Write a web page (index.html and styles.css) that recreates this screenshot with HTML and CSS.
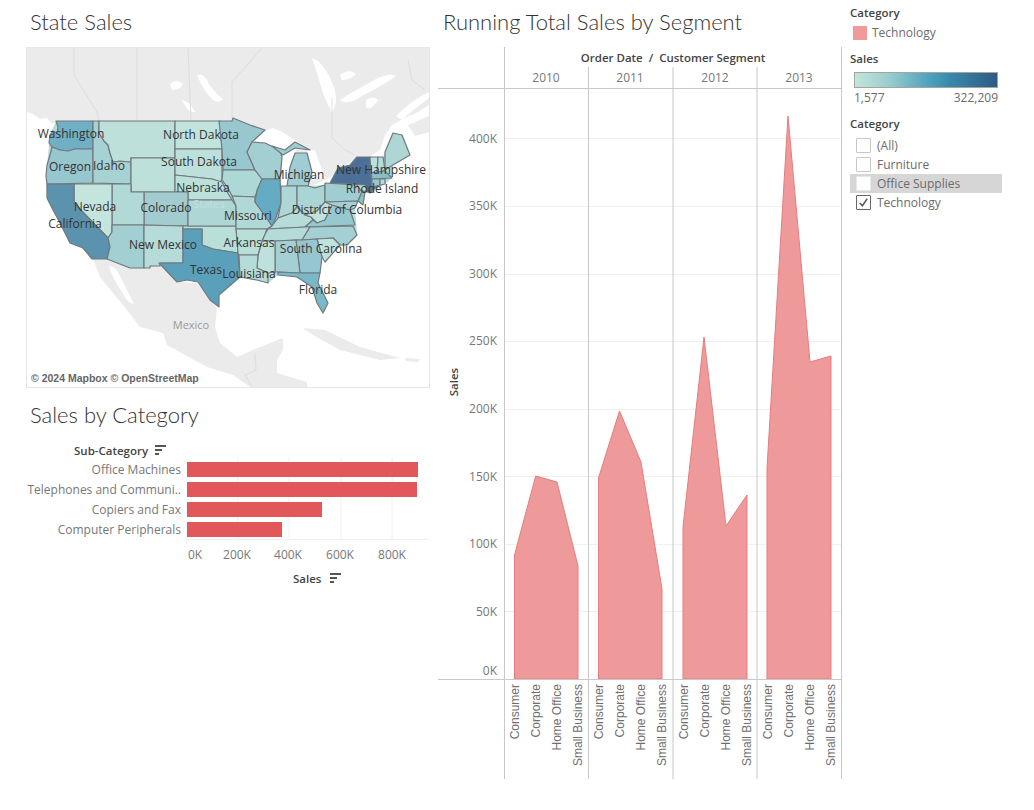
FILE: index.html
```html
<!DOCTYPE html>
<html lang="en">

<head>
    <meta charset="UTF-8">
    <title>Sales Dashboard</title>
    <link rel="stylesheet" href="styles.css">
</head>

<body>
    <div class="col-left">
        <h2 class="title">State Sales</h2>
        <div class="map-box">
            <svg class="map" viewBox="27 48 402 339" width="402" height="339">
                <!-- base map -->
                <g class="land">
                    <polygon points="27,48 429,48 429,105 418,112 405,118 392,125 385,135 380,150 365,160 345,172 320,185 305,190 300,170 295,150 270,135 250,128 233,121 57,121 52,124 47,118 40,119 33,114 27,112" />
                    <polygon points="408,125 429,116 429,132 415,136" />
                    <polygon points="93,259 108,259 130,268 160,265 172,277 183,282 197,283 217,308 215,327 220,343 237,357 260,347 283,338 283,350 277,360 277,373 307,382 307,387 250,387 233,375 207,367 167,345 163,333 140,327 127,310 113,293 100,277" />
                    <polygon points="303,328 325,330 360,347 400,358 380,360 340,350 313,335" />
                    <polygon points="405,358 420,359 418,362 406,361" />
                </g>
                <g class="water">
                    <path d="M109,266 Q116,266 120,276 L134,304 Q128,304 122,292 Q112,278 109,266z" />
                    <path d="M312,58 Q325,62 335,90 Q338,105 332,112 Q325,100 322,90 Q318,75 312,58z" />
                    <path d="M197,75 Q204,72 209,84 Q214,92 223,99 Q218,105 211,98 Q203,90 197,75z" />
                    <path d="M170,84 Q176,78 183,84 Q180,90 172,90z" />
                    <path d="M182,100 Q190,102 195,112 Q188,114 182,100z" />
                    <path d="M340,75 Q350,68 356,74 Q350,80 342,80z" />
                    <path d="M340,100 Q352,92 378,78 Q392,72 396,76 Q385,84 362,96 Q348,106 340,100z" />
                    <path d="M366,100 Q374,95 378,100 Q372,110 366,108z" />
                    <path d="M396,116 Q412,100 429,92 L429,98 Q415,108 402,120z" />
                    <path d="M252,141 Q258,134 265,131 L273,128 Q282,131 290,137 L305,147 Q296,145 290,146 L280,148 L265,143z" />
                    <path d="M280,183 L281,165 L286,155 L297,147 L295,153 L290,167 L287,186 L281,186z" />
                    <path d="M307,150 L315,150 Q318,160 323,172 L325,178 L312,180 L312,172z" />
                    <path d="M307,188 L325,180 L336,174 L352,160 L354,163 L342,171 L330,183 L312,189z" />
                </g>
                <polyline class="border-line" points="74,48 74,75 97,112 99,121" />
                <polyline class="border-line" points="137,48 137,120" />
                <polyline class="border-line" points="188,48 191,120" />
                <polyline class="border-line" points="262,48 232,82 232,118" />
                <polyline class="border-line" points="332,98 332,138 345,150 355,155" />
                <polyline class="border-line" points="408,60 412,80 425,90" />
                <polyline class="border-line" points="255,353 256,370 245,375 252,387" />

                <!-- states -->
                <polygon class="us-back" points="56,121 233,121 250,125 265,130 252,142 265,143 280,150 282,157 281,186 287,186 290,167 295,153 307,153 312,172 308,186 325,185 330,183 338,168 350,165 357,157 383,157 385,152 393,133 402,135 410,155 393,165 392,178 385,184 370,193 365,192 363,205 358,201 355,208 357,235 347,245 340,245 325,262 322,257 320,273 318,283 328,303 323,313 317,303 312,287 297,277 278,275 268,283 240,277 233,283 219,295 219,307 210,300 198,282 187,280 177,282 159,263 150,268 130,268 107,259 92,259 83,248 70,243 60,223 53,210 47,198 46,176 50,135" />
                <g class="states">
                    <polygon fill="#6fb0c4" points="56,121 93,121 93,149 75,149 68,151 60,150 52,147 49,143 50,135 53,131 57,133 58,127" />
                    <polygon fill="#96c6ce" points="52,147 60,150 68,151 75,149 93,149 93,183 47,184 46,176 47,165 50,155" />
                    <polygon fill="#a6d2d3" points="93,121 99,121 99,133 104,141 108,145 110,153 113,162 120,161 131,162 131,184 93,183" />
                    <polygon fill="#bde0da" points="99,121 175,121 175,158 131,158 131,162 120,161 113,162 110,153 108,145 104,141 99,133" />
                    <polygon fill="#bde0da" points="131,158 175,158 175,192 131,192" />
                    <polygon fill="#c0e3dc" points="175,121 220,121 222,149 175,149" />
                    <polygon fill="#bde0da" points="175,149 222,149 222,180 220,182 212,179 175,175" />
                    <polygon fill="#bce0da" points="175,175 212,179 222,182 226,190 232,200 188,200 188,192 175,192" />
                    <polygon fill="#a3ccd1" points="144,192 188,192 188,226 144,225" />
                    <polygon fill="#b1d9d6" points="112,184 131,184 131,192 144,192 144,225 112,225" />
                    <polygon fill="#c3e5de" points="74,184 112,184 112,232 108,238 74,203" />
                    <polygon fill="#5b93ae" points="47,184 74,184 74,203 108,238 110,247 107,259 92,259 83,248 70,243 60,223 53,210 47,198" />
                    <polygon fill="#a2cfd2" points="112,225 144,225 144,268 130,268 107,259 110,247 108,238 112,232" />
                    <polygon fill="#b5dcd8" points="144,225 183,226 183,263 160,263 160,266 150,266 150,268 144,268" />
                    <polygon fill="#b8e0d8" points="183,226 236,226 238,253 213,249 202,245 202,229 183,229" />
                    <polygon fill="#5ba0bb" points="183,229 202,229 202,245 213,249 238,253 240,277 233,283 219,295 219,307 210,300 198,282 187,280 177,282 159,263 183,263" />
                    <polygon fill="#aed6d5" points="188,200 232,200 236,206 236,226 188,226" />
                    <polygon fill="#99c7d0" points="219,121 232,121 233,118 250,125 265,130 252,142 247,152 255,170 223,170 222,149" />
                    <polygon fill="#aed8d5" points="223,170 255,170 262,179 255,197 232,196 228,188 222,180" />
                    <polygon fill="#b0d9d6" points="232,196 255,197 255,202 268,220 272,226 267,229 236,229 236,206" />
                    <polygon fill="#a3cfd3" points="252,142 265,143 280,150 282,157 280,179 262,179 255,170 247,152" />
                    <polygon fill="#65abc3" points="262,179 280,179 281,203 275,220 272,226 268,220 255,202 257,190" />
                    <polygon fill="#a0cdd3" points="295,153 307,153 312,172 308,186 287,186 290,167" />
                    <polygon fill="#a0cdd3" points="272,146 285,150 295,142 310,150 295,148 283,155" />
                    <polygon fill="#aed6d6" points="281,186 297,186 297,207 292,213 278,218 281,203" />
                    <polygon fill="#abd4d5" points="297,186 308,186 315,188 325,185 325,202 317,211 305,215 297,207" />
                    <polygon fill="#b5dcd8" points="272,226 278,218 292,213 297,207 305,215 311,217 313,220 305,227 268,229" />
                    <polygon fill="#c0e3dc" points="305,215 317,211 325,202 332,205 325,220 317,223 311,217" />
                    <polygon fill="#97c8cf" points="305,227 313,220 317,223 325,220 332,205 350,210 355,225" />
                    <polygon fill="#b4dbd8" points="268,229 305,227 310,227 302,240 296,240 275,241 262,241 265,234" />
                    <polygon fill="#a4d0d3" points="310,227 353,226 357,235 347,245 340,245 333,238 317,239 302,240" />
                    <polygon fill="#bfe3dc" points="317,239 333,238 340,245 325,262 322,257" />
                    <polygon fill="#96c6cf" points="296,240 302,240 317,239 322,257 320,273 300,273" />
                    <polygon fill="#a5d0d3" points="275,241 296,240 300,273 278,272 275,272" />
                    <polygon fill="#bee2db" points="262,241 275,241 275,272 268,273 257,268 258,255" />
                    <polygon fill="#b9dfd9" points="236,229 267,229 265,234 262,241 258,255 239,255 238,253" />
                    <polygon fill="#b5dcd8" points="239,255 258,255 257,268 268,273 268,283 257,280 240,277" />
                    <polygon fill="#78b8c8" points="278,272 300,273 320,273 318,283 328,303 323,313 317,303 312,287 297,277 278,275" />
                    <polygon fill="#4b6f96" points="357,157 370,157 371,173 372,190 367,190 365,185 330,183 338,168 350,165" />
                    <polygon fill="#4b6f96" points="365,191 378,185 370,193" />
                    <polygon fill="#9fcdd2" points="325,183 357,185 362,192 358,201 325,202" />
                    <polygon fill="#8abfcb" points="361,190 365,192 363,205 358,201 362,192" />
                    <polygon fill="#a4d0d3" points="325,202 358,201 355,208 350,210 332,205" />
                    <polygon fill="#bde0da" points="370,157 378,157 377,173 371,173" />
                    <polygon fill="#b5dcd8" points="378,157 383,157 385,170 377,173" />
                    <polygon fill="#aed6d4" points="385,152 393,133 402,135 410,155 393,165 385,170" />
                    <polygon fill="#88bdca" points="371,173 385,171 392,178 372,179" />
                    <polygon fill="#98c8cf" points="372,179 380,179 380,185 372,187" />
                    <polygon fill="#b5dcd8" points="380,179 385,179 385,184 380,185" />
                </g>

                <text class="us-label" x="209" y="208">States</text>
                <text class="mexico-label" x="191" y="329">Mexico</text>

                <g class="state-label">
                    <text x="71" y="138">Washington</text>
                    <text x="70" y="171">Oregon</text>
                    <text x="109" y="170">Idaho</text>
                    <text x="201" y="139">North Dakota</text>
                    <text x="199" y="166">South Dakota</text>
                    <text x="203" y="192">Nebraska</text>
                    <text x="95" y="211">Nevada</text>
                    <text x="166" y="212">Colorado</text>
                    <text x="75" y="228">California</text>
                    <text x="248" y="220">Missouri</text>
                    <text x="163" y="249">New Mexico</text>
                    <text x="249" y="247">Arkansas</text>
                    <text x="206" y="274">Texas</text>
                    <text x="249" y="278">Louisiana</text>
                    <text x="321" y="253">South Carolina</text>
                    <text x="318" y="294">Florida</text>
                    <text x="299" y="179">Michigan</text>
                    <text x="381" y="174">New Hampshire</text>
                    <text x="382" y="193">Rhode Island</text>
                    <text x="347" y="214">District of Columbia</text>
                </g>

                <rect class="credit-bg" x="29" y="370" width="175" height="15" />
                <text class="credit" x="31" y="382">© 2024 Mapbox © OpenStreetMap</text>
            </svg>
        </div>

        <h2 class="title title-bars">Sales by Category</h2>
        <svg class="bars" viewBox="26 440 404 160" width="404" height="160">
            <line class="grid" x1="238" y1="457" x2="238" y2="539" />
            <line class="grid" x1="289" y1="457" x2="289" y2="539" />
            <line class="grid" x1="341" y1="457" x2="341" y2="539" />
            <line class="grid" x1="392" y1="457" x2="392" y2="539" />
            <line class="grid" x1="187" y1="539.5" x2="429" y2="539.5" />
            <line class="grid" x1="186.5" y1="539" x2="186.5" y2="544" />

            <text class="field" x="74" y="455">Sub-Category</text>
            <g class="sort-icon">
                <rect x="155" y="445" width="11" height="2" />
                <rect x="155" y="449" width="7" height="2" />
                <rect x="155" y="453" width="4" height="2" />
            </g>

            <g class="bar-label">
                <text x="181" y="474">Office Machines</text>
                <text x="181" y="494">Telephones and Communi..</text>
                <text x="181" y="514">Copiers and Fax</text>
                <text x="181" y="534">Computer Peripherals</text>
            </g>
            <rect class="bar" x="187" y="462" width="231" height="15" />
            <rect class="bar" x="187" y="482" width="230" height="15" />
            <rect class="bar" x="187" y="502" width="135" height="15" />
            <rect class="bar" x="187" y="522" width="95" height="15" />

            <g class="axis-label">
                <text x="195" y="559">0K</text>
                <text x="237" y="559">200K</text>
                <text x="288" y="559">400K</text>
                <text x="340" y="559">600K</text>
                <text x="392" y="559">800K</text>
            </g>
            <text class="field" x="293" y="583">Sales</text>
            <g class="sort-icon">
                <rect x="330" y="573" width="11" height="2" />
                <rect x="330" y="577" width="7" height="2" />
                <rect x="330" y="581" width="4" height="2" />
            </g>
        </svg>
    </div>

    <div class="col-mid">
        <h2 class="title title-mid">Running Total Sales by Segment</h2>
        <svg class="area" viewBox="438 47 404 733" width="404" height="733">
            <!-- gridlines -->
            <g class="grid">
                <line x1="505" y1="138.5" x2="841" y2="138.5" />
                <line x1="505" y1="206.5" x2="841" y2="206.5" />
                <line x1="505" y1="274.5" x2="841" y2="274.5" />
                <line x1="505" y1="341.5" x2="841" y2="341.5" />
                <line x1="505" y1="409.5" x2="841" y2="409.5" />
                <line x1="505" y1="476.5" x2="841" y2="476.5" />
                <line x1="505" y1="544.5" x2="841" y2="544.5" />
                <line x1="505" y1="611.5" x2="841" y2="611.5" />
            </g>

            <polygon class="area-fill" points="514.5,679 514.5,555 535.7,476 557,482 578,566 578,679" />
            <polygon class="area-fill" points="598.5,679 598.5,478 619.5,411 641,462 662,589 662,679" />
            <polygon class="area-fill" points="683,679 683,527 704,337 726,526 747,495 747,679" />
            <polygon class="area-fill" points="767,679 767,468 788,116 810,362 831,356 831,679" />

            <!-- frame -->
            <g class="frame">
                <line x1="504.5" y1="47" x2="504.5" y2="779" />
                <line x1="588.5" y1="67" x2="588.5" y2="779" />
                <line x1="673" y1="67" x2="673" y2="779" />
                <line x1="757" y1="67" x2="757" y2="779" />
                <line x1="841.5" y1="47" x2="841.5" y2="779" />
                <line x1="438" y1="88.5" x2="842" y2="88.5" />
                <line x1="438" y1="679.5" x2="842" y2="679.5" />
            </g>

            <text class="field middle" x="673" y="62">Order Date&#160; /&#160; Customer Segment</text>
            <g class="year-label">
                <text x="546" y="82">2010</text>
                <text x="630" y="82">2011</text>
                <text x="715" y="82">2012</text>
                <text x="799" y="82">2013</text>
            </g>

            <text class="field middle" transform="translate(458 382) rotate(-90)">Sales</text>

            <g class="tick-label">
                <text x="497" y="143">400K</text>
                <text x="497" y="210">350K</text>
                <text x="497" y="278">300K</text>
                <text x="497" y="345">250K</text>
                <text x="497" y="413">200K</text>
                <text x="497" y="481">150K</text>
                <text x="497" y="548">100K</text>
                <text x="497" y="616">50K</text>
                <text x="497" y="675">0K</text>
            </g>

            <g class="seg-label">
                <text transform="translate(519 684) rotate(-90)">Consumer</text>
                <text transform="translate(540 684) rotate(-90)">Corporate</text>
                <text transform="translate(561 684) rotate(-90)">Home Office</text>
                <text transform="translate(582 684) rotate(-90)">Small Business</text>
                <text transform="translate(603 684) rotate(-90)">Consumer</text>
                <text transform="translate(624 684) rotate(-90)">Corporate</text>
                <text transform="translate(645 684) rotate(-90)">Home Office</text>
                <text transform="translate(666 684) rotate(-90)">Small Business</text>
                <text transform="translate(688 684) rotate(-90)">Consumer</text>
                <text transform="translate(709 684) rotate(-90)">Corporate</text>
                <text transform="translate(730 684) rotate(-90)">Home Office</text>
                <text transform="translate(751 684) rotate(-90)">Small Business</text>
                <text transform="translate(772 684) rotate(-90)">Consumer</text>
                <text transform="translate(793 684) rotate(-90)">Corporate</text>
                <text transform="translate(814 684) rotate(-90)">Home Office</text>
                <text transform="translate(835 684) rotate(-90)">Small Business</text>
            </g>
        </svg>
    </div>

    <div class="col-right">
        <div class="legend-title first">Category</div>
        <div class="swatch-row">
            <span class="swatch"></span>
            <span class="item-text">Technology</span>
        </div>

        <div class="legend-title sales-title">Sales</div>
        <div class="ramp"></div>
        <div class="ramp-values">
            <span>1,577</span>
            <span>322,209</span>
        </div>

        <div class="legend-title filter-title">Category</div>
        <div class="filter-item"><span class="check"></span><span class="item-text">(All)</span></div>
        <div class="filter-item"><span class="check"></span><span class="item-text">Furniture</span></div>
        <div class="filter-item hover"><span class="check plain"></span><span class="item-text">Office Supplies</span></div>
        <div class="filter-item">
            <span class="check checked">
                <svg viewBox="0 0 14 14" width="13" height="13">
                    <path d="M3 7.5 L5.8 10.5 L11 3" fill="none" stroke="#555" stroke-width="1.6" />
                </svg>
            </span>
            <span class="item-text">Technology</span>
        </div>
    </div>
</body>

</html>
```

FILE: styles.css
```css
* {
    box-sizing: border-box;
}

body {
    margin: 0;
    width: 1034px;
    height: 810px;
    display: flex;
    background-color: #fff;
    font-family: "Open Sans", "Noto Sans", sans-serif;
    color: #333;
    overflow: hidden;
}

svg {
    display: block;
}

svg text {
    font-family: "Open Sans", "Noto Sans", sans-serif;
}

/* columns */
.col-left {
    width: 404px;
    margin-left: 26px;
}

.col-mid {
    width: 404px;
    margin-left: 8px;
}

.col-right {
    width: 152px;
    margin-left: 8px;
}

/* titles */
.title {
    margin: 0;
    height: 47px;
    padding-left: 4px;
    padding-bottom: 4px;
    display: flex;
    align-items: center;
    font-family: "Lato", sans-serif;
    font-size: 22px;
    font-weight: 300;
    color: #333;
}

.title-bars {
    height: 52px;
    padding-top: 2px;
    padding-bottom: 1px;
}

.title-mid {
    padding-left: 5px;
}

/* map */
.map-box {
    width: 404px;
    height: 341px;
    border: 1px solid #e6e6e6;
}

.land {
    filter: blur(0.6px);
}

.land polygon {
    fill: #ebebeb;
}

.water {
    filter: blur(0.7px);
}

.water path {
    fill: #fff;
}

.border-line {
    fill: none;
    stroke: #d8d8d8;
    stroke-width: 0.8;
}

.us-back {
    fill: #b5dcd8;
}

.states polygon {
    stroke: #70797d;
    stroke-width: 1.2;
    stroke-linejoin: round;
}

.state-label text {
    font-size: 12px;
    fill: #333;
    text-anchor: middle;
}

.us-label {
    font-size: 11px;
    fill: #c4e0de;
    text-anchor: middle;
}

.mexico-label {
    font-size: 11px;
    fill: #999;
    text-anchor: middle;
}

.credit-bg {
    fill: #fff;
    fill-opacity: 0.75;
}

svg text.credit {
    font-family: "Liberation Sans", Arial, sans-serif;
    font-size: 10.5px;
    font-weight: bold;
    fill: #666;
}

/* charts */
.grid,
.grid line {
    stroke: #f0f0f0;
    stroke-width: 1;
}

.frame line {
    stroke: #c8c8c8;
    stroke-width: 1;
}

.field {
    font-size: 11.5px;
    font-weight: 600;
    fill: #444;
}

.middle {
    text-anchor: middle;
}

.sort-icon rect {
    fill: #555;
}

.bar {
    fill: #e1575a;
}

.bar-label text,
.tick-label text {
    font-size: 12px;
    fill: #777;
    text-anchor: end;
}

.axis-label text,
.year-label text {
    font-size: 12px;
    fill: #777;
    text-anchor: middle;
}

.area-fill {
    fill: #ee9a9b;
    stroke: #e87b7d;
    stroke-width: 1;
}

svg .seg-label text {
    font-family: "Liberation Sans", Arial, sans-serif;
    font-size: 12px;
    fill: #6e6e6e;
    text-anchor: end;
}

/* legends */
.legend-title {
    font-size: 11.5px;
    font-weight: 600;
    height: 16px;
    line-height: 16px;
    color: #444;
}

.legend-title.first {
    margin-top: 5px;
}

.swatch-row {
    display: flex;
    align-items: center;
    margin-top: 3px;
    padding-left: 3px;
}

.swatch {
    width: 14px;
    height: 14px;
    background-color: #f19a9c;
    margin-right: 5px;
}

.item-text {
    font-size: 12px;
    color: #6b6b6b;
}

.sales-title {
    margin-top: 10px;
}

.ramp {
    width: 144px;
    height: 16px;
    margin: 5px 0 0 4px;
    border: 1px solid #a5a59a;
    background: linear-gradient(to right, #c3e5dc, #9dd0cf 22%, #55a5bd 50%, #3a8cae 65%, #2f5a85);
}

.ramp-values {
    width: 144px;
    margin: 1px 0 0 4px;
    display: flex;
    justify-content: space-between;
    font-size: 12px;
    line-height: 18px;
    color: #6b6b6b;
}

.filter-title {
    margin-top: 9px;
    margin-bottom: 4px;
}

.filter-item {
    display: flex;
    align-items: center;
    height: 19px;
    padding-left: 6px;
}

.filter-item.hover {
    background-color: #d6d6d6;
}

.check {
    width: 15px;
    height: 15px;
    margin-right: 6px;
    background-color: #fff;
    border: 1px solid #c8c8c8;
    border-radius: 1px;
    display: flex;
    align-items: center;
    justify-content: center;
}

.check.plain {
    border-color: #e8e8e8;
}

.check.checked {
    border-color: #666;
}
```
